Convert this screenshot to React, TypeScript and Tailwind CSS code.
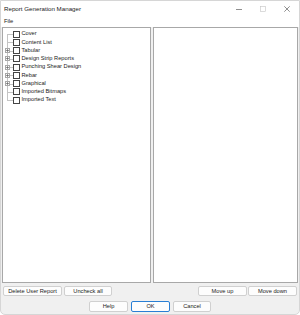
import React from "react";

const items: { label: string; expandable: boolean }[] = [
  { label: "Cover", expandable: false },
  { label: "Content List", expandable: false },
  { label: "Tabular", expandable: true },
  { label: "Design Strip Reports", expandable: true },
  { label: "Punching Shear Design", expandable: true },
  { label: "Rebar", expandable: true },
  { label: "Graphical", expandable: true },
  { label: "Imported Bitmaps", expandable: false },
  { label: "Imported Text", expandable: false },
];

function Btn({ label, w, primary }: { label: string; w: string; primary?: boolean }) {
  return (
    <div
      className={`${w} h-full flex items-center justify-center rounded-[2px] border bg-[#fdfdfd] text-[5.7px] text-[#1a1a1a] ${
        primary ? "border-[#2a7fd4]" : "border-[#d0d0d0]"
      }`}
    >
      {label}
    </div>
  );
}

export default function App() {
  return (
    <div
      className="w-[300px] h-[315px] flex flex-col bg-[#f0f0f0] border border-[#d6d6d6] rounded-b-[5px] overflow-hidden"
      style={{ fontFamily: '"Liberation Sans", Arial, sans-serif' }}
    >
      {/* Title bar */}
      <div className="h-[15px] bg-white flex items-center">
        <div className="pl-[3px] text-[6.2px] text-[#1a1a1a] flex-1">Report Generation Manager</div>
        <div className="flex items-center h-full">
          <div className="w-[24px] h-full flex items-center justify-center">
            <svg width="6" height="6" viewBox="0 0 6 6">
              <line x1="0" y1="3.5" x2="6" y2="3.5" stroke="#444" strokeWidth="0.6" />
            </svg>
          </div>
          <div className="w-[24px] h-full flex items-center justify-center">
            <svg width="6" height="6" viewBox="0 0 6 6">
              <rect x="0.5" y="0.5" width="5" height="5" fill="none" stroke="#c4c4c4" strokeWidth="0.6" />
            </svg>
          </div>
          <div className="w-[24px] h-full flex items-center justify-center">
            <svg width="6" height="6" viewBox="0 0 6 6">
              <line x1="0.3" y1="0.3" x2="5.7" y2="5.7" stroke="#444" strokeWidth="0.6" />
              <line x1="5.7" y1="0.3" x2="0.3" y2="5.7" stroke="#444" strokeWidth="0.6" />
            </svg>
          </div>
        </div>
      </div>
      {/* Menu bar */}
      <div className="h-[11px] bg-white flex items-center">
        <div className="pl-[3px] text-[5.8px] text-[#1a1a1a]">File</div>
      </div>
      {/* Panels */}
      <div className="flex-1 flex px-[1px] gap-[2px] min-h-0">
        <div className="w-[149px] h-full bg-white border border-[#a8a8a8] pt-[2px]">
          {items.map((it, i) => (
            <div key={it.label} className="h-[8.25px] flex items-center">
              <div className="relative w-[10px] h-full shrink-0">
                <div
                  className={`absolute left-[4px] border-l border-[#c4c4c4] ${
                    i === 0 ? "top-1/2 bottom-0" : i === items.length - 1 ? "top-0 h-1/2" : "top-0 bottom-0"
                  }`}
                />
                <div className="absolute left-[4px] top-1/2 w-[6px] border-t border-[#c4c4c4]" />
                {it.expandable && (
                  <div className="absolute left-[2px] top-[1.6px] w-[5px] h-[5px] bg-white border border-[#a8a8a8] flex items-center justify-center">
                    <svg width="3" height="3" viewBox="0 0 3 3">
                      <line x1="0" y1="1.5" x2="3" y2="1.5" stroke="#555" strokeWidth="0.6" />
                      <line x1="1.5" y1="0" x2="1.5" y2="3" stroke="#555" strokeWidth="0.6" />
                    </svg>
                  </div>
                )}
              </div>
              <div className="w-[7px] h-[7px] border border-[#444444] bg-white shrink-0" />
              <div className="pl-[1.5px] text-[5.7px] text-[#1a1a1a] whitespace-nowrap leading-none">{it.label}</div>
            </div>
          ))}
        </div>
        <div className="flex-1 h-full bg-white border border-[#a8a8a8]" />
      </div>
      {/* Button row 1 */}
      <div className="h-[10px] mt-[3px] flex px-[2px]">
        <Btn label="Delete User Report" w="w-[59px]" />
        <div className="w-[2px]" />
        <Btn label="Uncheck all" w="w-[48px]" />
        <div className="flex-1" />
        <Btn label="Move up" w="w-[49px]" />
        <div className="w-[1px]" />
        <Btn label="Move down" w="w-[49px]" />
      </div>
      {/* Button row 2 */}
      <div className="h-[11px] mt-[5px] mb-[2px] flex justify-center gap-[3px]">
        <Btn label="Help" w="w-[39px]" />
        <Btn label="OK" w="w-[39px]" primary />
        <Btn label="Cancel" w="w-[38px]" />
      </div>
    </div>
  );
}
